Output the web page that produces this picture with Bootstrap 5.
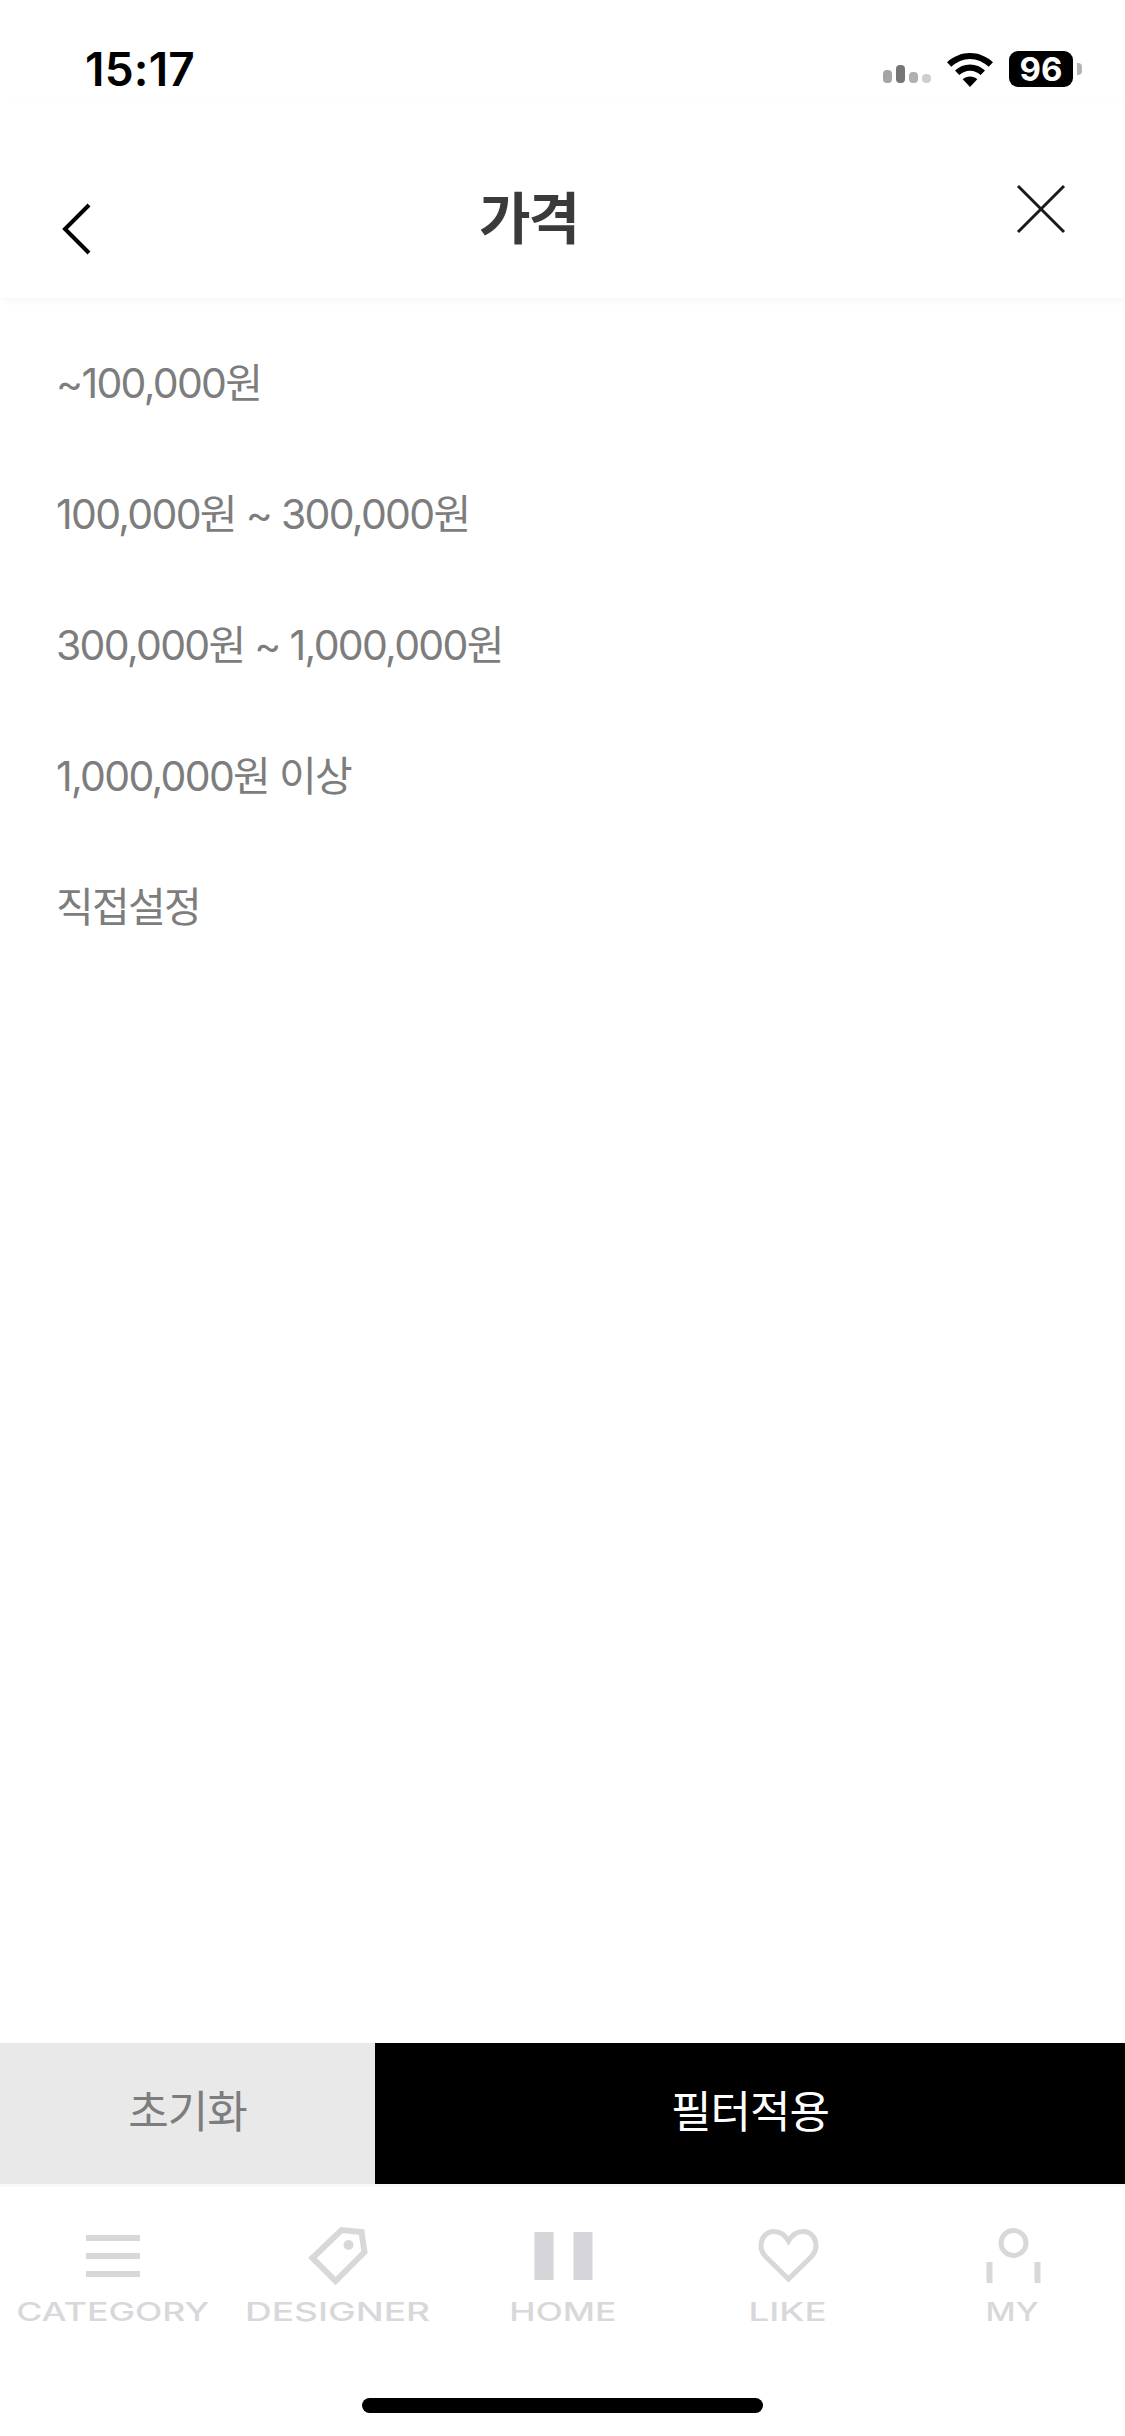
<!doctype html>
<html lang="ko">

<head>
    <meta charset="UTF-8">
    <meta name="viewport" content="width=device-width, initial-scale=1.0">
    <title>가격</title>
    <link href="https://cdn.jsdelivr.net/npm/bootstrap@5.3.0/dist/css/bootstrap.min.css" rel="stylesheet">
    <style>
        body { font-family: Inter, "Noto Sans CJK KR", sans-serif; background: #fff; }
        .screen { height: 2436px; width: 1125px; overflow: hidden; }

        .status-row { height: 100px; padding: 51px 43px 0 85px; }
        .clock { font-family: Inter, sans-serif; font-size: 46px; line-height: 36px; font-weight: 600; color: #000; letter-spacing: .2px; }
        .sig-bar { width: 9px; border-radius: 4px; }
        .batt { width: 64px; height: 36px; border-radius: 9px; background: #000; color: #fff; font: 700 33px/36px Inter, sans-serif; text-align: center; }
        .batt-nub { width: 5px; height: 12px; margin-left: 4px; background: #b5b5b5; border-radius: 0 4px 4px 0; }

        .top-head { height: 198px; box-shadow: 0 3px 8px rgba(0, 0, 0, .035); padding: 0 58px 0 59px; }
        .top-title { margin: 0 0 0 386px; font-size: 56px; line-height: 1; font-weight: 700; color: #3a3a3a; letter-spacing: -2px; padding-top: 91px; }
        .back-icon { margin-top: 102px; }
        .close-icon { margin-top: 83px; }

        .price-list { padding-top: 20px; }
        .price-list .list-group-item { height: 131px; padding: 0 0 0 56px; border: 0; display: flex; align-items: center; font-size: 41px; color: #7d7d7d; letter-spacing: -1.7px; }

        .act-row { height: 141px; }
        .act-btn { border: 0; border-radius: 0; font-size: 44px; letter-spacing: -1px; line-height: 1; padding-bottom: 10px; }
        .act-reset { width: 375px; background: #e9e9e9; color: #7d7d7d; }
        .act-apply { background: #000; color: #fff; }
        .act-reset:hover { background: #e9e9e9; color: #7d7d7d; }
        .act-apply:hover { background: #000; color: #fff; }

        .tab-row { height: 252px; border-top: 3px solid #f8f8f8; position: relative; }
        .tab-cell { width: 225px; padding-top: 39px; }
        .tab-cell svg { display: block; height: 62px; width: 80px; flex-shrink: 0; }
        .tab-text { font-family: Inter, sans-serif; font-weight: 500; font-size: 25px; line-height: 25px; color: #d8d8db; margin-top: 12px; white-space: nowrap; }
        .home-bar { position: absolute; left: 362px; top: 211px; width: 401px; height: 15px; border-radius: 8px; background: #000; }
    </style>
</head>

<body>
    <div class="screen d-flex flex-column">
        <div class="status-row d-flex justify-content-between align-items-start">
            <div class="clock">15:17</div>
            <div class="d-flex align-items-end">
                <div class="d-flex align-items-end gap-1 me-3 pb-1">
                    <div class="sig-bar" style="height:13px;background:#a5a5a5"></div>
                    <div class="sig-bar" style="height:18px;background:#767676"></div>
                    <div class="sig-bar" style="height:11px;background:#b0b0b0"></div>
                    <div class="sig-bar" style="height:9px;background:#cfcfcf"></div>
                </div>
                <svg width="46" height="34" viewBox="0 0 46 34" class="me-3 mb-0">
                    <path d="M23 0C14.500 0 6.700 3.300 0 9.200l4.300 4.500C9.800 8.900 16.200 6 23 6s13.200 2.900 18.700 7.700L46 9.200C39.300 3.300 31.500 0 23 0z"/>
                    <path d="M23 11.500c-5.700 0-10.800 2.200-15 6l4.300 4.500c3-2.700 6.600-4.300 10.700-4.300s7.700 1.600 10.700 4.300l4.300-4.500c-4.200-3.800-9.300-6-15-6z"/>
                    <path d="M23 23.500c-2.800 0-5.300 1-7.300 2.800L23 34l7.300-7.700c-2-1.800-4.500-2.800-7.300-2.800z"/>
                </svg>
                <div class="d-flex align-items-center">
                    <div class="batt">96</div>
                    <div class="batt-nub"></div>
                </div>
            </div>
        </div>

        <div class="top-head d-flex align-items-start">
            <svg class="back-icon" width="34" height="54" viewBox="0 0 34 54" fill="none" stroke="#000" stroke-width="4">
                <path d="M30 3 6 27l24 24"/>
            </svg>
            <h1 class="top-title">가격</h1>
            <svg class="close-icon ms-auto" width="52" height="52" viewBox="0 0 52 52" fill="none" stroke="#1a1a1a" stroke-width="3">
                <path d="M3 3l46 46M49 3 3 49"/>
            </svg>
        </div>

        <div class="flex-grow-1">
            <ul class="list-group list-group-flush price-list" id="priceList"></ul>
        </div>

        <div class="act-row d-flex">
            <button type="button" class="btn act-btn act-reset">초기화</button>
            <button type="button" class="btn act-btn act-apply flex-grow-1">필터적용</button>
        </div>

        <div class="tab-row d-flex align-items-start">
            <div class="tab-cell d-flex flex-column align-items-center">
                <svg viewBox="0 0 80 62" fill="#d8d8db">
                    <rect x="13" y="9" width="54" height="6"/>
                    <rect x="13" y="27" width="54" height="6"/>
                    <rect x="13" y="45" width="54" height="6"/>
                </svg>
                <div class="tab-text" data-w="193">CATEGORY</div>
            </div>
            <div class="tab-cell d-flex flex-column align-items-center">
                <svg viewBox="0 0 80 62" fill="none" stroke="#d8d8db" stroke-width="6">
                    <path d="M14.500 32 43.500 4l20 2 3 20-29 29z"/>
                    <circle cx="50.500" cy="19" r="5" fill="#d8d8db" stroke="none"/>
                </svg>
                <div class="tab-text" data-w="185">DESIGNER</div>
            </div>
            <div class="tab-cell d-flex flex-column align-items-center">
                <svg viewBox="0 0 80 62" fill="#d5d5da">
                    <rect x="11.500" y="6" width="19" height="48"/>
                    <rect x="50.500" y="6" width="19" height="48"/>
                </svg>
                <div class="tab-text" data-w="107">HOME</div>
            </div>
            <div class="tab-cell d-flex flex-column align-items-center">
                <svg viewBox="0 0 80 62" fill="none" stroke="#d8d8db" stroke-width="5">
                    <path d="M40.500 15C37 9 32 5.500 26 5.500 18 5.500 13 12 13 20c0 4 1.500 7 4 10l23.500 23L64 30c2.500-3 4-6 4-10 0-8-5-14.500-13-14.500-6 0-11 3.500-14.500 9.500z"/>
                </svg>
                <div class="tab-text" data-w="78">LIKE</div>
            </div>
            <div class="tab-cell d-flex flex-column align-items-center">
                <svg viewBox="0 0 80 62" fill="none" stroke="#d8d8db" stroke-width="5">
                    <circle cx="40.500" cy="17" r="12.500"/>
                    <path d="M16.500 36v21M64.500 36v21" stroke-width="6"/>
                </svg>
                <div class="tab-text" data-w="53">MY</div>
            </div>
            <div class="home-bar"></div>
        </div>
    </div>

    <script src="https://cdn.jsdelivr.net/npm/bootstrap@5.3.0/dist/js/bootstrap.bundle.min.js"></script>
    <script>
        const prices = ['~100,000원', '100,000원 ~ 300,000원', '300,000원 ~ 1,000,000원', '1,000,000원 이상', '직접설정'];
        const priceList = document.getElementById('priceList');
        prices.forEach((price) => {
            const item = document.createElement('li');
            item.className = 'list-group-item';
            item.textContent = price;
            priceList.appendChild(item);
        });

        // tab labels are an extended face in the picture, so stretch to the measured width
        document.querySelectorAll('.tab-text').forEach((label) => {
            const ratio = label.dataset.w / label.getBoundingClientRect().width;
            label.style.transform = `scaleX(${ratio})`;
        });
    </script>
</body>

</html>
